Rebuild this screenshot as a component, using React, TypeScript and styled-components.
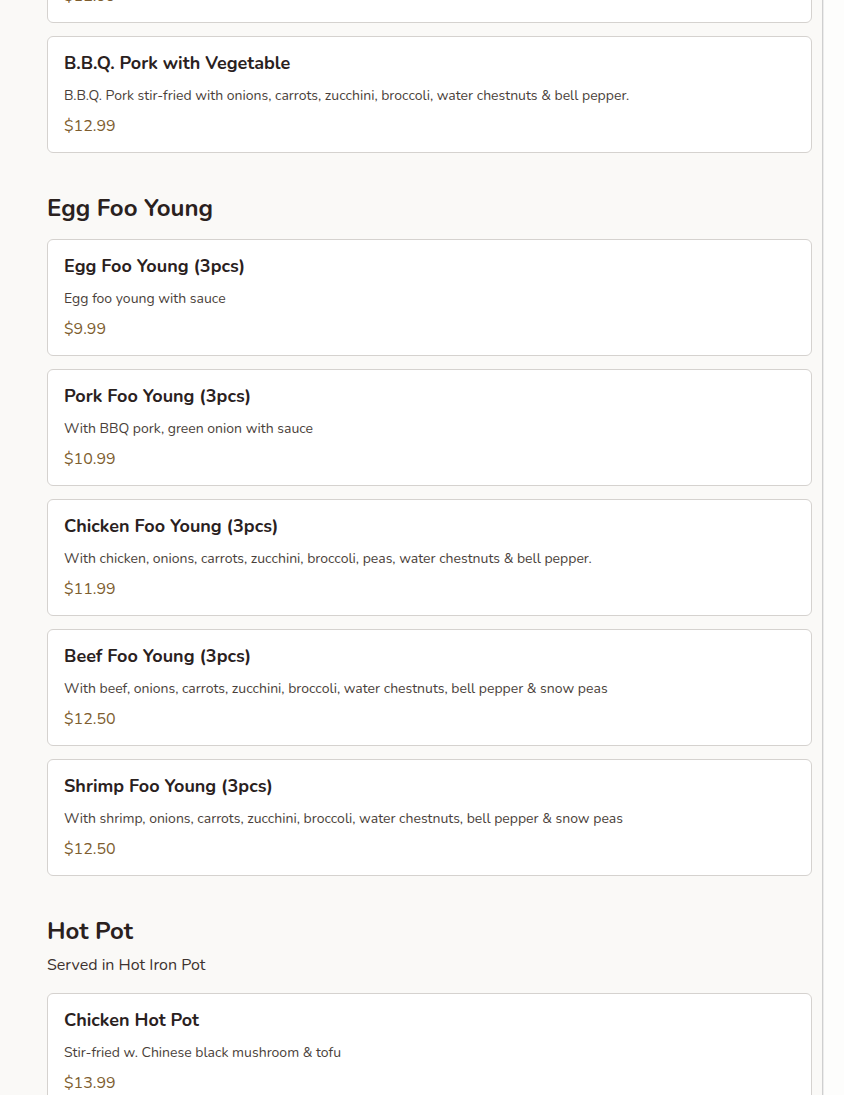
import { FC } from 'react'
import styled, { createGlobalStyle } from 'styled-components'

interface IMenuItem {
   name: string
   description: string
   price: string
}

interface ISection {
   title?: string
   subtitle?: string
   items: IMenuItem[]
}

const sections: ISection[] = [
   {
      items: [
         {
            name: 'Roast Pork with Broccoli',
            description: 'Roast pork stir-fried with fresh broccoli in brown sauce.',
            price: '$12.99',
         },
         {
            name: 'B.B.Q. Pork with Vegetable',
            description:
               'B.B.Q. Pork stir-fried with onions, carrots, zucchini, broccoli, water chestnuts & bell pepper.',
            price: '$12.99',
         },
      ],
   },
   {
      title: 'Egg Foo Young',
      items: [
         { name: 'Egg Foo Young (3pcs)', description: 'Egg foo young with sauce', price: '$9.99' },
         {
            name: 'Pork Foo Young (3pcs)',
            description: 'With BBQ pork, green onion with sauce',
            price: '$10.99',
         },
         {
            name: 'Chicken Foo Young (3pcs)',
            description:
               'With chicken, onions, carrots, zucchini, broccoli, peas, water chestnuts & bell pepper.',
            price: '$11.99',
         },
         {
            name: 'Beef Foo Young (3pcs)',
            description:
               'With beef, onions, carrots, zucchini, broccoli, water chestnuts, bell pepper & snow peas',
            price: '$12.50',
         },
         {
            name: 'Shrimp Foo Young (3pcs)',
            description:
               'With shrimp, onions, carrots, zucchini, broccoli, water chestnuts, bell pepper & snow peas',
            price: '$12.50',
         },
      ],
   },
   {
      title: 'Hot Pot',
      subtitle: 'Served in Hot Iron Pot',
      items: [
         {
            name: 'Chicken Hot Pot',
            description: 'Stir-fried w. Chinese black mushroom & tofu',
            price: '$13.99',
         },
         {
            name: 'Beef Hot Pot',
            description: 'Stir-fried w. Chinese black mushroom & tofu',
            price: '$14.99',
         },
      ],
   },
]

const MenuCard: FC<IMenuItem> = ({ name, description, price }) => (
   <Card>
      <ItemName>{name}</ItemName>
      <ItemDescription>{description}</ItemDescription>
      <ItemPrice>{price}</ItemPrice>
   </Card>
)

export default function App() {
   return (
      <>
         <GlobalStyle />
         <Page>
            <Column>
               {sections.map((section, i) => (
                  <Section key={i}>
                     {section.title && (
                        <SectionHeader>
                           <SectionTitle>{section.title}</SectionTitle>
                           {section.subtitle && <SectionSubtitle>{section.subtitle}</SectionSubtitle>}
                        </SectionHeader>
                     )}
                     <CardList>
                        {section.items.map(item => (
                           <MenuCard key={item.name} {...item} />
                        ))}
                     </CardList>
                  </Section>
               ))}
            </Column>
         </Page>
      </>
   )
}

const GlobalStyle = createGlobalStyle`
   html, body {
      margin: 0;
      padding: 0;
      background: #fdfdfc;
      overflow: hidden;
   }
   body {
      font-family: 'Nunito', Lato, 'Noto Sans', sans-serif;
      color: #2a211e;
   }
`

const Page = styled.div`
   width: 822px;
   height: 1095px;
   overflow: hidden;
   background: #faf9f7;
   border-right: 1px solid #cfcfcf;
   box-shadow: 1px 0 0 #ececec;
`

/* the list is shown scrolled part way down, so the first card peeks in from the top */
const Column = styled.main`
   width: 765px;
   margin-top: -94px;
   padding-left: 47px;
   display: flex;
   flex-direction: column;
   gap: 39px;
`

const Section = styled.section`
   display: flex;
   flex-direction: column;
`

const SectionHeader = styled.header`
   display: flex;
   flex-direction: column;
   gap: 6px;
   margin-bottom: 15px;
`

const SectionTitle = styled.h2`
   margin: 0;
   font-size: 24px;
   line-height: 32px;
   font-weight: 700;
   color: #2a211e;
`

const SectionSubtitle = styled.p`
   margin: 0 0 1px;
   font-size: 16px;
   line-height: 24px;
   color: #3d3330;
`

const CardList = styled.div`
   display: flex;
   flex-direction: column;
   gap: 13px;
`

const Card = styled.article`
   background: #ffffff;
   border: 1px solid #d5d2cf;
   border-radius: 6px;
   padding: 15px 16px 15px;
   display: flex;
   flex-direction: column;
`

const ItemName = styled.h3`
   margin: 0;
   font-size: 18px;
   line-height: 22px;
   font-weight: 700;
   color: #2a211e;
`

const ItemDescription = styled.p`
   margin: 12px 0 0;
   font-size: 14px;
   line-height: 20px;
   color: #4a3f3a;
`

const ItemPrice = styled.span`
   margin-top: 9px;
   font-size: 16px;
   line-height: 22px;
   color: #7d5d2e;
`
